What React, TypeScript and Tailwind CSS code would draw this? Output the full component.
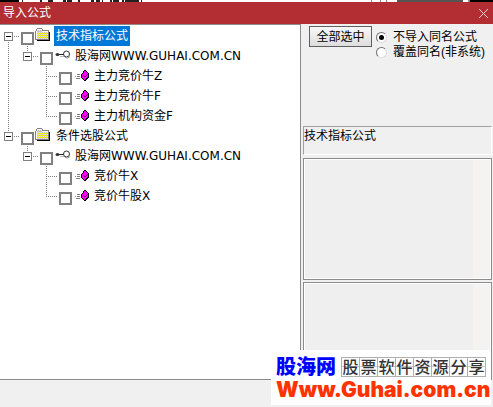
import { useState } from "react";

type Connector = "line" | "blank" | "tee" | "end" | "first" | "last" | "child";
type IconName = "folder" | "key" | "formula";

type Row = {
  label: string;
  icon: IconName;
  cells: Connector[];
  selected?: boolean;
};

const rows: Row[] = [
  { label: "技术指标公式", icon: "folder", cells: ["first"], selected: true },
  { label: "股海网WWW.GUHAI.COM.CN", icon: "key", cells: ["line", "child"] },
  { label: "主力竞价牛Z", icon: "formula", cells: ["line", "blank", "tee"] },
  { label: "主力竞价牛F", icon: "formula", cells: ["line", "blank", "tee"] },
  { label: "主力机构资金F", icon: "formula", cells: ["line", "blank", "end"] },
  { label: "条件选股公式", icon: "folder", cells: ["last"] },
  { label: "股海网WWW.GUHAI.COM.CN", icon: "key", cells: ["blank", "child"] },
  { label: "竞价牛X", icon: "formula", cells: ["blank", "blank", "tee"] },
  { label: "竞价牛股X", icon: "formula", cells: ["blank", "blank", "end"] },
];

const connectors: Record<Connector, string> = {
  line: "M8.5 0V20",
  blank: "",
  tee: "M8.5 0V20M10 10.5H20",
  end: "M8.5 0V10M8 10.5H20",
  first: "M8.5 16V20M14 10.5H19",
  last: "M8.5 0V6M14 10.5H19",
  child: "M8.5 0V6M14 10.5H19",
};

function Cell({ type }: { type: Connector }) {
  const drawing = (
    <svg width="19" height="20" viewBox="0 0 19 20" shapeRendering="crispEdges">
      <path d={connectors[type]} stroke="#808080" strokeDasharray="1 1" />
      {(type === "first" || type === "last" || type === "child") && (
        <>
          <rect x="4.5" y="6.5" width="8" height="8" fill="#fff" stroke="#808080" />
          <path d="M6 10.5H11" stroke="#000" />
        </>
      )}
    </svg>
  );

  if (type === "first" || type === "last" || type === "child") {
    return (
      <button type="button" aria-label="折叠" className="shrink-0">
        {drawing}
      </button>
    );
  }
  return <span className="shrink-0">{drawing}</span>;
}

function NodeIcon({ name }: { name: IconName }) {
  if (name === "folder") {
    return (
      <svg width="16" height="16" viewBox="0 0 16 16" shapeRendering="crispEdges">
        <path d="M14 4h1v9H2v-1h12z" fill="#000" />
        <path d="M0 3h1V1h1V0h5v1h1v1h6v10H0z" fill="#808080" />
        <path d="M1 3h1V1h5v2h6v8H1z" fill="#c8c8c8" />
        <path
          d="M2 2.5h5M2 4.5h11M3 5.5h10M2 6.5h11M3 7.5h10M2 8.5h11M3 9.5h10M2 10.5h11"
          stroke="#ffff00"
          strokeDasharray="1 1"
        />
        <path d="M1.5 11V3M2 1.5h5M7 3.5h6" fill="none" stroke="#fff" strokeWidth="1" />
      </svg>
    );
  }
  if (name === "key") {
    return (
      <svg width="16" height="16" viewBox="-1 0 16 16">
        <path d="M1 6.5h9" stroke="#202020" strokeWidth="1" />
        <ellipse cx="2.5" cy="6.5" rx="2" ry="1.5" fill="#333" />
        <path d="M5 8.5h4" stroke="#bbb" />
        <circle cx="11.5" cy="6" r="3" fill="#fff" stroke="#303030" />
        <path d="M10 9.5q2 1.5 5-1" fill="none" stroke="#999" />
      </svg>
    );
  }
  return (
    <svg width="16" height="16" viewBox="-1 0 16 16" shapeRendering="crispEdges">
      <path d="M3 6.5h3M1 8.5h1M3 8.5h3M2 10.5h4" stroke="#808080" />
      <path d="M10 2h2v1h1v1h1v1h1v5h-1v1h-1v1h-1v1h-2v-1H9v-1H8v-1H7V6h1V5h1V3h1z" fill="#000" />
      <path d="M10 3h2v1h1v1h1v4h-1v1h-1v1h-1v1h-1v-1H9v-1H8V6h1V5h1z" fill="#ff00ff" />
      <path d="M9 7.5h1M10 8.5h2M12 7.5h1M13 6.5h1" fill="none" stroke="#800080" />
    </svg>
  );
}

function TreeRow({ row, index }: { row: Row; index: number }) {
  const id = `formula-${index}`;
  return (
    <li className="flex h-5 items-center">
      {row.cells.map((type, i) => (
        <Cell key={i} type={type} />
      ))}
      <input
        id={id}
        type="checkbox"
        className="mt-1 ml-0.5 size-[13px] shrink-0 appearance-none border-2 border-[#808080] bg-white checked:bg-[#808080]"
      />
      <span className="mr-[3px] ml-px shrink-0 self-start pt-0.5">
        <NodeIcon name={row.icon} />
      </span>
      <label
        htmlFor={id}
        className={
          row.selected
            ? "bg-[#0078d7] px-0.5 leading-5 whitespace-nowrap text-white"
            : "px-0.5 leading-5 whitespace-nowrap"
        }
      >
        {row.label}
      </label>
    </li>
  );
}

function Memo({ label, className }: { label: string; className: string }) {
  return (
    <div className={`flex border border-[#8c8c8c] bg-white p-px ${className}`}>
      <textarea aria-label={label} readOnly className="min-w-0 flex-1 resize-none bg-[#efefef] outline-none" />
      <div className="w-[17px] bg-[#f4f3f1]" />
    </div>
  );
}

const options = ["不导入同名公式", "覆盖同名(非系统)"];

export default function App() {
  const [mode, setMode] = useState(0);

  return (
    <div className="relative flex h-screen flex-col overflow-hidden bg-[#f0f0f0] font-['Noto_Sans','Noto_Sans_CJK_SC',sans-serif] text-xs text-black">
      {/* sliver of the window underneath */}
      <div className="h-0.5 shrink-0 overflow-hidden bg-white">
        <svg width="493" height="2" shapeRendering="crispEdges">
          <path d="M0 1h19M470 1h23" stroke="#000" strokeWidth="2" />
          <path d="M22 1h1M40 1h2M48 1h5M63 1h3M67 1h5M78 1h2M91 1h3M96 1h4M102 1h1M110 1h2M113 1h6M122 1h2M125 1h14M141 1h1" stroke="#222" strokeWidth="2" />
          <path d="M371 1h1M380 1h1M386 1h1M468 1h2" stroke="#888" strokeWidth="2" />
          <path d="M397 1h66" stroke="#555" strokeWidth="2" />
        </svg>
      </div>

      <header className="flex h-[22px] shrink-0 items-center justify-between bg-[#b22e32] pr-1 pl-[3px] text-white">
        <h1>导入公式</h1>
        <button type="button" aria-label="关闭" className="flex size-[11px] items-center">
          <svg width="11" height="11" viewBox="0 0 11 11">
            <path d="M1 1l9 9M10 1l-9 9" stroke="#f0d4d5" strokeWidth="1" />
          </svg>
        </button>
      </header>

      <main className="grid min-h-0 flex-1 grid-cols-[1fr_192px]">
        <ul className="border-t border-r border-b border-[#8c8c8c] bg-white pt-px font-['DejaVu_Sans','Noto_Sans_CJK_SC',sans-serif]">
          {rows.map((row, i) => (
            <TreeRow key={i} row={row} index={i} />
          ))}
        </ul>

        <section className="flex min-h-0 flex-col pr-px pl-0.5">
          <div className="flex h-[102px] shrink-0 gap-1 pt-0.5 pl-1.5">
            <button
              type="button"
              className="h-[21px] w-[63px] border border-[#606060] bg-linear-to-b from-[#f8f8f8] to-[#dddddd] whitespace-nowrap"
            >
              全部选中
            </button>
            <fieldset className="pt-1 font-['Liberation_Sans','Noto_Sans_CJK_SC',sans-serif]">
              {options.map((option, i) => (
                <label key={option} className="flex h-[15px] items-center gap-1.5 leading-[15px] whitespace-nowrap">
                  <input
                    type="radio"
                    name="mode"
                    checked={mode === i}
                    onChange={() => setMode(i)}
                    className="grid size-[11px] appearance-none place-items-center rounded-full border border-t-[#707070] border-r-[#dddddd] border-b-[#dddddd] border-l-[#707070] bg-white before:size-[5px] before:rounded-full checked:before:bg-black"
                  />
                  {option}
                </label>
              ))}
            </fieldset>
          </div>

          <p className="h-[29px] shrink-0 border border-t-[#a0a0a0] border-r-white border-b-white border-l-[#a0a0a0] leading-[18px]">
            技术指标公式
          </p>
          <Memo label="公式说明" className="mt-[3px] h-[122px] shrink-0" />
          <Memo label="公式内容" className="mt-0.5 min-h-0 flex-1" />
        </section>
      </main>

      <footer className="h-[27px] shrink-0" />

      <div className="absolute right-0.5 bottom-0.5 w-[220px] bg-white px-[5px] pt-1 pb-1">
        <div className="flex h-[25px] items-center justify-between">
          <span className="text-xl leading-6 font-black text-[#0000ff]">股海网</span>
          <span className="flex border-l border-[#b0b0b0] bg-[linear-gradient(#c8c8c8,#c8c8c8)] bg-[length:100%_1px] bg-center bg-no-repeat text-base leading-[18px] font-medium text-[#333333]">
            {[..."股票软件资源分享"].map((char) => (
              <span key={char} className="w-[18px] border-y border-r border-[#b0b0b0] text-center">
                {char}
              </span>
            ))}
          </span>
        </div>
        <a href="#guhai" className="block font-['Inter','Liberation_Sans',sans-serif] text-[21px] leading-[22px] font-black whitespace-nowrap text-[#ff3300]">
          Www.Guhai.com.cn
        </a>
      </div>
    </div>
  );
}
